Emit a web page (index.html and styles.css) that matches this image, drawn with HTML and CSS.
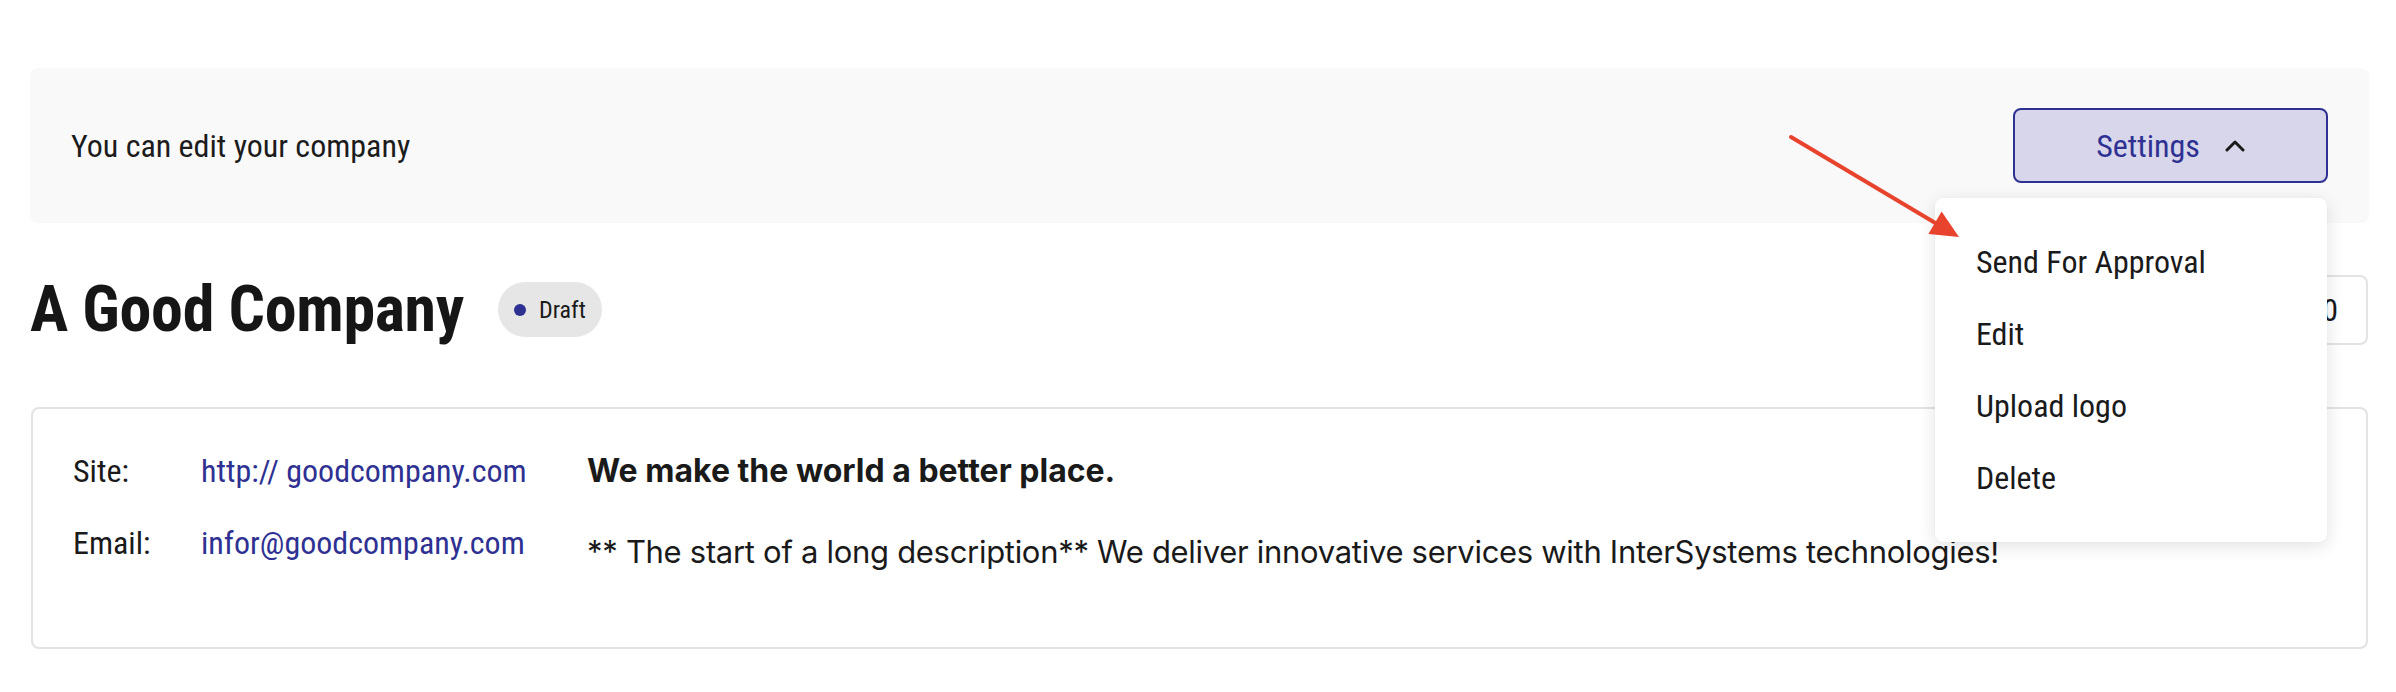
FILE: index.html
```html
<!DOCTYPE html>
<html lang="en">
<head>
<meta charset="utf-8">
<title>A Good Company</title>
<link rel="stylesheet" href="styles.css">
</head>
<body>
<div class="page">
  <div class="banner">
    <span class="banner-text">You can edit your company</span>
    <div class="settings">
      <button class="settings-btn" type="button">
        <span>Settings</span>
        <svg class="chev" width="20" height="14" viewBox="0 0 20 14" aria-hidden="true"><path d="M2 12 L10 4 L18 12" fill="none" stroke="#1a1a1a" stroke-width="3" stroke-linecap="round" stroke-linejoin="round"/></svg>
      </button>
      <ul class="menu">
        <li>Send For Approval</li>
        <li>Edit</li>
        <li>Upload logo</li>
        <li>Delete</li>
      </ul>
    </div>
  </div>

  <div class="title-row">
    <h1 class="title">A Good Company</h1>
    <span class="badge"><span class="dot"></span>Draft</span>
    <div class="count">0</div>
  </div>

  <div class="card">
    <div class="info">
      <span class="label">Site:</span><a class="value">http:// goodcompany.com</a>
      <span class="label">Email:</span><a class="value">infor@goodcompany.com</a>
    </div>
    <div class="desc">
      <p class="desc-title">We make the world a better place.</p>
      <p class="desc-text">** The start of a long description** We deliver innovative services with InterSystems technologies!</p>
    </div>
  </div>
</div>

<svg class="arrow" width="190" height="115" viewBox="0 0 190 115" aria-hidden="true">
  <line x1="11" y1="7" x2="157" y2="94" stroke="#e8432d" stroke-width="4" stroke-linecap="round"/>
  <polygon points="179,107 148.4,103.9 161.6,81.5" fill="#e8432d"/>
</svg>
</body>
</html>
```
FILE: styles.css
```css
html, body { margin: 0; padding: 0; background: #ffffff; }
body {
  position: relative;
  font-family: "Roboto Condensed", Roboto, "Liberation Sans", sans-serif;
  font-stretch: condensed;
  color: #1a1a1a;
  width: 2396px;
  height: 692px;
  overflow: hidden;
}
.page {
  padding: 68px 27px 0 30px;
}

/* banner */
.banner {
  height: 155px;
  background: #f9f9f9;
  border-radius: 8px;
  display: flex;
  align-items: center;
  justify-content: space-between;
  padding: 0 41px;
  box-sizing: border-box;
}
.banner-text { font-size: 32px; color: #1c1c1c; }
.settings { position: relative; }
.settings-btn {
  width: 315px;
  height: 75px;
  box-sizing: border-box;
  border: 2px solid #2e3192;
  border-radius: 8px;
  background: #d8d6ea;
  color: #2e3192;
  font-family: inherit;
  font-stretch: condensed;
  font-size: 32px;
  display: flex;
  align-items: center;
  justify-content: center;
  gap: 25px;
  padding: 0;
}
.chev { display: block; margin-top: -2px; }
.menu {
  position: absolute;
  top: calc(100% + 15px);
  right: 1px;
  width: 392px;
  box-sizing: border-box;
  margin: 0;
  padding: 28px 0 28px 41px;
  list-style: none;
  background: #ffffff;
  border-radius: 8px;
  box-shadow: 0 4px 18px rgba(0, 0, 0, 0.12), 0 0 2px rgba(0, 0, 0, 0.04);
  z-index: 5;
}
.menu li {
  font-size: 32px;
  line-height: 72px;
  color: #1a1a1a;
}

/* title row */
.title-row {
  display: flex;
  align-items: center;
  margin-top: 47px;
  height: 79px;
}
.title {
  margin: 0;
  font-size: 64px;
  font-weight: 700;
  letter-spacing: -0.3px;
  line-height: 79px;
  color: #161616;
}
.badge {
  margin-left: 34px;
  height: 55px;
  border-radius: 28px;
  background: #e6e6e6;
  display: inline-flex;
  align-items: center;
  padding: 0 16px;
  box-sizing: border-box;
  font-size: 24px;
  color: #1a1a1a;
}
.dot {
  width: 12px;
  height: 12px;
  border-radius: 50%;
  background: #2e3192;
  margin-right: 13px;
}
.count {
  margin-left: auto;
  margin-right: 1px;
  height: 70px;
  width: 180px;
  box-sizing: border-box;
  border: 2px solid #e3e3e3;
  border-radius: 8px;
  display: flex;
  align-items: center;
  justify-content: flex-end;
  padding-right: 28px;
  font-size: 32px;
}

/* card */
.card {
  margin-top: 58px;
  margin-right: 1px;
  margin-left: 1px;
  border: 2px solid #e3e3e3;
  border-radius: 8px;
  padding: 26px 40px 59px 40px;
  display: flex;
}
.info {
  display: grid;
  grid-template-columns: 128px 386px;
  grid-auto-rows: 72px;
  font-size: 32px;
  line-height: 72px;
}
.label { color: #1a1a1a; }
.value { color: #2e3192; text-decoration: none; }
.desc {
  font-family: Inter, "Liberation Sans", sans-serif;
  font-stretch: normal;
  font-size: 31px;
  letter-spacing: -0.3px;
  color: #1a1a1a;
}
.desc p { margin: 0; line-height: 72px; }
.desc .desc-title { font-weight: 700; font-size: 32px; letter-spacing: 0; }
.desc .desc-text { margin-top: 9px; }

/* annotation arrow */
.arrow {
  position: absolute;
  left: 1780px;
  top: 130px;
  z-index: 10;
}
```
